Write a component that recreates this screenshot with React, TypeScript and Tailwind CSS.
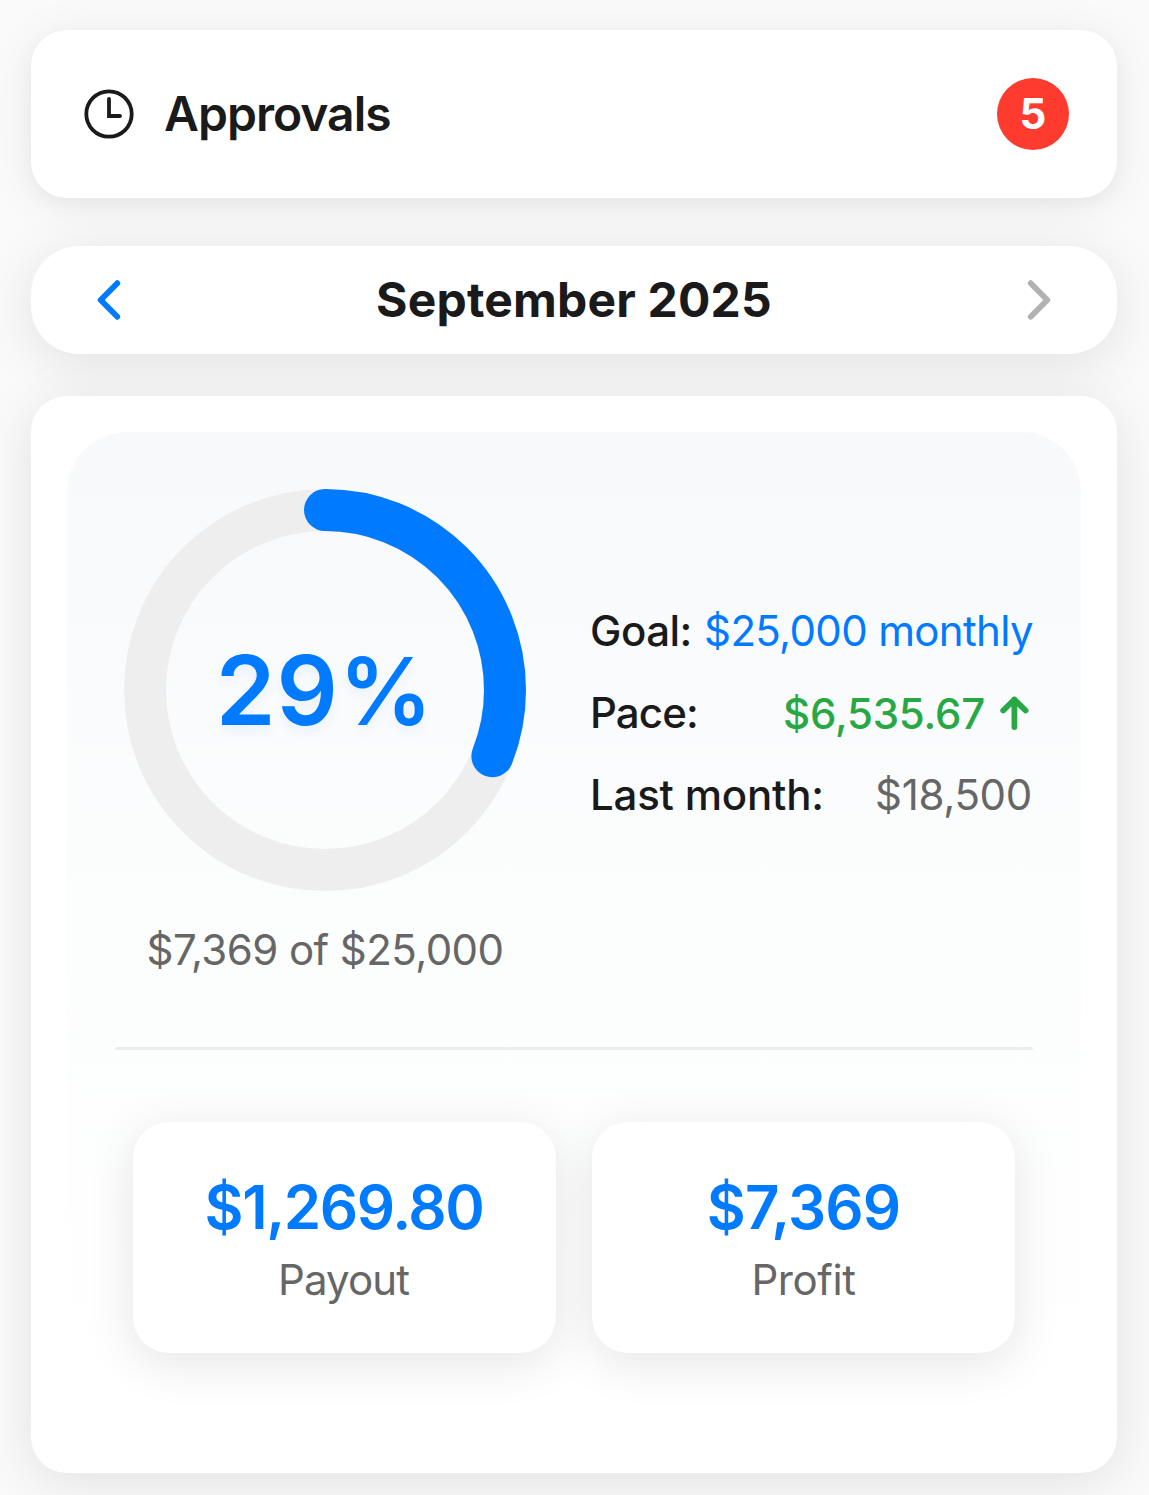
import React from "react";

function Approvals() {
  return (
    <section className="mx-auto flex h-[168px] w-[1086px] shrink-0 items-center rounded-[36px] bg-white pl-[53px] pr-12 shadow-[0_6px_18px_rgba(0,0,0,0.04),0_6px_48px_rgba(0,0,0,0.07)]">
      <svg width="50" height="50" viewBox="0 0 50 50" fill="none" stroke="#1a1a1a" strokeWidth="3.8" strokeLinecap="round" strokeLinejoin="miter">
        <circle cx="25" cy="25" r="22.7" />
        <path d="M25 10V27H36" />
      </svg>
      <span className="ml-[30px] text-[48px] font-semibold leading-none tracking-[-0.98px] text-[#1a1a1a]">Approvals</span>
      <span className="ml-auto flex size-[72px] items-center justify-center rounded-full bg-[#ff3b30] pb-[2px] text-[42px] font-bold text-white">5</span>
    </section>
  );
}

function MonthPicker() {
  return (
    <section className="mx-auto mt-12 flex h-[108px] w-[1086px] shrink-0 items-center justify-between rounded-[48px] bg-white px-[62px] shadow-[0_9px_54px_rgba(0,0,0,0.1)]">
      <svg width="32" height="44" viewBox="0 0 32 44" fill="none" stroke="#007aff" strokeWidth="5.8" strokeLinecap="round" strokeLinejoin="round">
        <path d="M24.3 5.2L7.7 22L24.3 38.8" />
      </svg>
      <span className="text-[48px] font-bold leading-none tracking-[0.2px] text-[#1a1a1a]">September 2025</span>
      <svg width="32" height="44" viewBox="0 0 32 44" fill="none" stroke="#b2b2b2" strokeWidth="5.8" strokeLinecap="round" strokeLinejoin="round">
        <path d="M7.7 5.2L24.3 22L7.7 38.8" />
      </svg>
    </section>
  );
}

function Ring() {
  return (
    <div className="grid size-[402px] place-items-center">
      <svg className="col-start-1 row-start-1" width="402" height="402" viewBox="0 0 402 402" fill="none" strokeWidth="42">
        <circle cx="201" cy="201" r="180" stroke="#eeeeee" />
        <circle cx="201" cy="201" r="180" stroke="#007aff" strokeLinecap="round" pathLength="100" strokeDasharray="31 100" transform="rotate(-90 201 201)" />
      </svg>
      <span className="col-start-1 row-start-1 mr-[2px] flex items-baseline text-[96px] font-[580] leading-none text-[#007aff] [text-shadow:0_6px_12px_rgba(0,122,255,0.08)]">
        <span className="tracking-[1px]">29</span>
        <span className="text-[93px]">%</span>
      </span>
    </div>
  );
}

function Stat({ children, label }: { children: React.ReactNode; label: React.ReactNode }) {
  return (
    <div className="flex h-[231px] w-[423px] flex-col items-center rounded-[36px] bg-white pt-[49px] shadow-[0_10px_48px_rgba(0,0,0,0.1)]">
      <span className="text-[60px] font-semibold leading-[72px] text-[#007aff]">{children}</span>
      <span className="text-[42px] leading-[74px] text-[#666]">{label}</span>
    </div>
  );
}

export default function App() {
  return (
    <main className="flex h-[1495px] w-[1149px] flex-col overflow-hidden bg-[#fafafa] pr-[1px] pt-[30px] font-[Inter,sans-serif]">
      <Approvals />
      <MonthPicker />
      <section className="mx-auto mt-[42px] h-[1077px] w-[1086px] shrink-0 rounded-[36px] bg-white p-9 shadow-[0_9px_54px_rgba(0,0,0,0.1)]">
        <div className="h-full rounded-[60px] bg-linear-to-b from-[#f8f9fb] via-[#fcfdfd] to-white px-12 pt-[57px]">
          <div className="flex h-[558px]">
            <div className="ml-[9px] flex w-[402px] flex-col items-center">
              <Ring />
              <span className="mt-[34px] whitespace-nowrap text-[42px] leading-[50px] tracking-[-0.55px] text-[#666]">$7,369 of $25,000</span>
            </div>
            <dl className="ml-16 mt-[101px] flex flex-1 flex-col text-[42px] leading-[82px] text-[#1a1a1a]">
              <div className="flex justify-between whitespace-nowrap">
                <dt className="font-medium tracking-[-0.5px]">Goal:</dt>
                <dd className="tracking-[-0.65px] text-[#007aff]">$25,000 monthly</dd>
              </div>
              <div className="flex justify-between whitespace-nowrap">
                <dt className="font-medium tracking-[-0.9px]">Pace:</dt>
                <dd className="flex items-center pt-[2px] font-medium leading-[80px] tracking-[-0.2px] text-[#28a745]">
                  $6,535.67
                  <svg className="mb-[2px] ml-[15px] mr-[3px]" width="30" height="36" viewBox="0 0 30 36" fill="none" stroke="currentColor" strokeWidth="5.8" strokeLinecap="round" strokeLinejoin="round">
                    <path d="M14.4 32V4.5M3.2 15.5L14.4 4.5L25.6 15.5" />
                  </svg>
                </dd>
              </div>
              <div className="flex justify-between whitespace-nowrap">
                <dt className="font-medium tracking-[-0.2px]">Last month:</dt>
                <dd className="pr-[1px] tracking-[-0.3px] text-[#666]">$18,500</dd>
              </div>
            </dl>
          </div>
          <hr className="h-[3px] rounded-full border-0 bg-[#eeeeee]" />
          <div className="mt-[72px] flex justify-center gap-9">
            <Stat label={<span className="mr-[2px] tracking-[-0.9px]">Payout</span>}>
              <span className="mr-[1px] tracking-[-1.4px]">$1,269.80</span>
            </Stat>
            <Stat label={<span className="tracking-[-0.4px]">Profit</span>}>
              <span className="tracking-[-0.9px]">$7,369</span>
            </Stat>
          </div>
        </div>
      </section>
    </main>
  );
}
